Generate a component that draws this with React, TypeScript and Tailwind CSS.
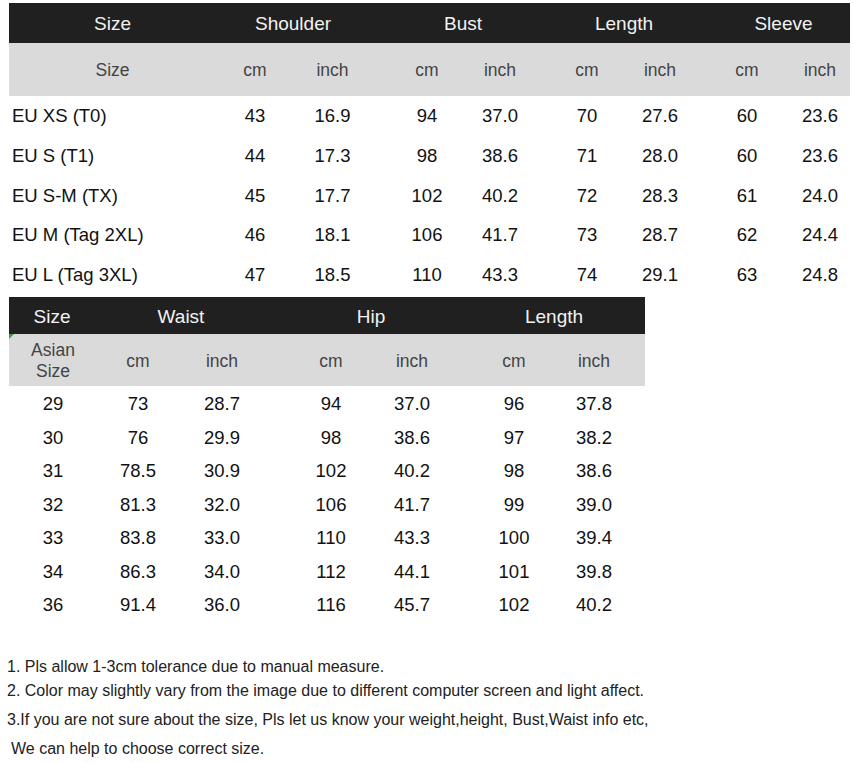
import React from "react";

const t1Cols = [
  "w-[207px]",
  "w-[78px] text-center",
  "w-[86px] text-center pr-[9px]",
  "w-[84px] text-center pl-[10px]",
  "w-[80px] text-center pr-[8px]",
  "w-[80px] text-center pl-[6px]",
  "w-[80px] text-center pr-[8px]",
  "w-[80px] text-center pl-[6px]",
  "w-[66px] text-center pl-[6px]",
];

const t1Rows = [
  ["EU XS (T0)", "43", "16.9", "94", "37.0", "70", "27.6", "60", "23.6"],
  ["EU S (T1)", "44", "17.3", "98", "38.6", "71", "28.0", "60", "23.6"],
  ["EU S-M (TX)", "45", "17.7", "102", "40.2", "72", "28.3", "61", "24.0"],
  ["EU M (Tag 2XL)", "46", "18.1", "106", "41.7", "73", "28.7", "62", "24.4"],
  ["EU L (Tag 3XL)", "47", "18.5", "110", "43.3", "74", "29.1", "63", "24.8"],
];

const t2Cols = [
  "w-[88px] text-center",
  "w-[82px] text-center",
  "w-[86px] text-center",
  "w-[106px] text-center pl-[26px]",
  "w-[82px] text-center",
  "w-[101px] text-center pl-[21px]",
  "w-[91px] text-center pr-[11px]",
];

const t2Rows = [
  ["29", "73", "28.7", "94", "37.0", "96", "37.8"],
  ["30", "76", "29.9", "98", "38.6", "97", "38.2"],
  ["31", "78.5", "30.9", "102", "40.2", "98", "38.6"],
  ["32", "81.3", "32.0", "106", "41.7", "99", "39.0"],
  ["33", "83.8", "33.0", "110", "43.3", "100", "39.4"],
  ["34", "86.3", "34.0", "112", "44.1", "101", "39.8"],
  ["36", "91.4", "36.0", "116", "45.7", "102", "40.2"],
];

export default function App() {
  return (
    <div
      className="w-[853px] h-[763px] bg-white overflow-hidden"
      style={{ fontFamily: '"Liberation Sans", Arial, sans-serif' }}
    >
      <div className="pt-[3px] pl-[9px]">
        {/* Table 1 */}
        <div className="w-[841px]">
          <div className="flex items-center h-[40px] pt-[2px] bg-[#202020] text-[#f2f2f2] text-[19px]">
            <div className="w-[207px] text-center">Size</div>
            <div className="w-[164px] text-center pr-[10px]">Shoulder</div>
            <div className="w-[164px] text-center pl-[2px]">Bust</div>
            <div className="w-[160px] text-center">Length</div>
            <div className="w-[146px] text-center pl-[13px]">Sleeve</div>
          </div>
          <div className="flex items-center h-[53px] pt-[2px] bg-[#dadada] text-[#444] text-[17.5px]">
            <div className="w-[207px] text-center">Size</div>
            {["cm", "inch", "cm", "inch", "cm", "inch", "cm", "inch"].map((u, i) => (
              <div key={i} className={t1Cols[i + 1]}>
                {u}
              </div>
            ))}
          </div>
          {t1Rows.map((r, ri) => (
            <div key={ri} className="flex items-center h-[39.8px] text-[#111] text-[18.5px]">
              {r.map((c, ci) => (
                <div key={ci} className={ci === 0 ? "w-[207px] pl-[3px]" : t1Cols[ci]}>
                  {c}
                </div>
              ))}
            </div>
          ))}
        </div>

        {/* Table 2 */}
        <div className="w-[636px] mt-[2px]">
          <div className="flex items-center h-[37px] pt-[4px] bg-[#202020] text-[#f2f2f2] text-[19px]">
            <div className="w-[88px] text-center pr-[2px]">Size</div>
            <div className="w-[168px] text-center">Waist</div>
            <div className="w-[188px] text-center pl-[24px]">Hip</div>
            <div className="w-[192px] text-center pl-[10px]">Length</div>
          </div>
          <div className="relative flex items-center h-[52px] pt-[2px] bg-[#dadada] text-[#444] text-[17.5px]">
            <svg className="absolute left-0 top-0" width="5" height="5" viewBox="0 0 5 5">
              <polygon points="0,0 5,0 0,5" fill="#3a9a3a" />
            </svg>
            <div className="w-[88px] text-center leading-[21px]">
              Asian
              <br />
              Size
            </div>
            {["cm", "inch", "cm", "inch", "cm", "inch"].map((u, i) => (
              <div key={i} className={t2Cols[i + 1]}>
                {u}
              </div>
            ))}
          </div>
          {t2Rows.map((r, ri) => (
            <div key={ri} className="flex items-center h-[33.6px] pt-[2px] text-[#111] text-[18.5px]">
              {r.map((c, ci) => (
                <div key={ci} className={t2Cols[ci]}>
                  {c}
                </div>
              ))}
            </div>
          ))}
        </div>
      </div>

      {/* Notes */}
      <div className="pl-[7px] mt-[34px] text-[#222] text-[16px]">
        <div className="h-[24px] leading-[24px]">1. Pls allow 1-3cm tolerance due to manual measure.</div>
        <div className="h-[26px] leading-[24px]">
          2. Color may slightly vary from the image due to different computer screen and light affect.
        </div>
        <div className="h-[29px] leading-[30px]">
          3.If you are not sure about the size, Pls let us know your weight,height, Bust,Waist info etc,
        </div>
        <div className="h-[29px] leading-[30px] pl-[4px]">We can help to choose correct size.</div>
      </div>
    </div>
  );
}
